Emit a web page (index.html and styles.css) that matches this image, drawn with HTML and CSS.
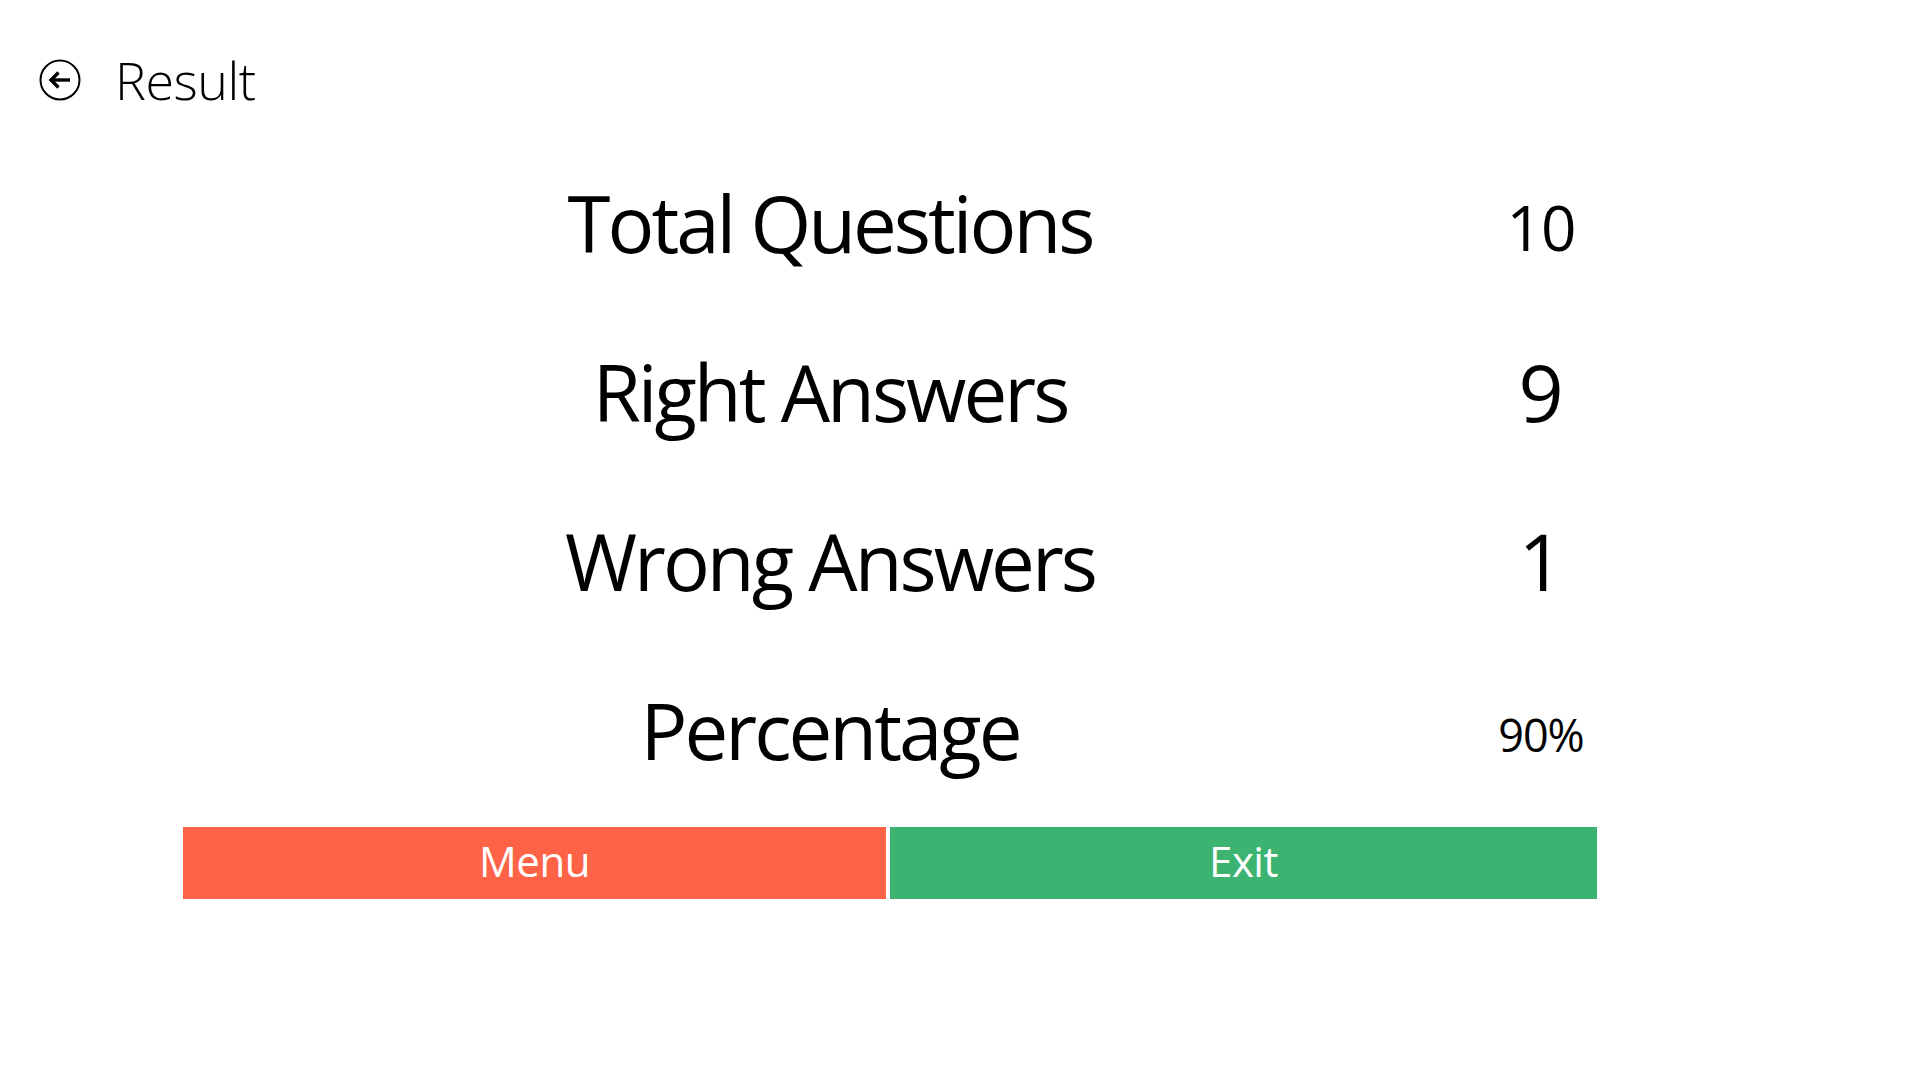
FILE: index.html
```html
<!DOCTYPE html>
<html lang="en">
<head>
<meta charset="utf-8">
<title>Result</title>
<link rel="stylesheet" href="styles.css">
</head>
<body>
<div class="page">
  <header class="header">
    <button class="back" aria-label="Back">
      <svg width="44" height="44" viewBox="0 0 44 44">
        <circle cx="22" cy="22" r="19.5" fill="none" stroke="#000" stroke-width="2"/>
        <path d="M32 22 H13" fill="none" stroke="#000" stroke-width="3.4"/>
        <path d="M20.5 14.5 L13 22 L20.5 29.5" fill="none" stroke="#000" stroke-width="3.4" stroke-linejoin="miter"/>
      </svg>
    </button>
    <h1 class="title">Result</h1>
  </header>
  <main class="content">
    <div class="stats">
      <div class="label">Total Questions</div>
      <div class="value v-mid">10</div>
      <div class="label">Right Answers</div>
      <div class="value v-big">9</div>
      <div class="label">Wrong Answers</div>
      <div class="value v-big">1</div>
      <div class="label">Percentage</div>
      <div class="value v-small">90%</div>
    </div>
    <div class="actions">
      <button class="btn btn-menu">Menu</button>
      <button class="btn btn-exit">Exit</button>
    </div>
  </main>
</div>
</body>
</html>
```
FILE: styles.css
```css
* { box-sizing: border-box; }
html, body {
  margin: 0;
  padding: 0;
  background: #fff;
  width: 1920px;
  height: 1080px;
  overflow: hidden;
}
body {
  font-family: "Open Sans", "Noto Sans", sans-serif;
  color: #000;
}
.page {
  display: flex;
  flex-direction: column;
}
.header {
  height: 138px;
  display: flex;
  align-items: flex-start;
  padding-top: 58px;
  padding-left: 38px;
}
.back {
  width: 44px;
  height: 44px;
  padding: 0;
  margin: 0;
  border: none;
  background: none;
  display: block;
}
.back svg { display: block; }
.title {
  margin: 0 0 0 33px;
  font-weight: 300;
  font-size: 52px;
  line-height: 44px;
  letter-spacing: -0.5px;
}
.content {
  padding-left: 183px;
  width: 1597px;
  box-sizing: content-box;
}
.stats {
  display: grid;
  grid-template-columns: 1294px 128px;
  grid-auto-rows: 169px;
}
.label {
  display: flex;
  align-items: center;
  justify-content: center;
  font-size: 78px;
  letter-spacing: -3px;
  font-weight: 400;
}
.value {
  display: flex;
  align-items: center;
  justify-content: center;
  font-weight: 400;
}
.v-mid { font-size: 62px; padding-top: 8px; letter-spacing: -1px; }
.v-big { font-size: 79px; padding-top: 0; }
.v-small { font-size: 45px; padding-top: 9px; letter-spacing: -1px; }
.actions {
  display: flex;
  gap: 4px;
  margin-top: 13px;
  width: 1414px;
}
.btn {
  border: none;
  margin: 0;
  height: 72px;
  color: #fff;
  font-family: "Open Sans", "Noto Sans", sans-serif;
  font-size: 42px;
  font-weight: 400;
  letter-spacing: -0.5px;
  display: flex;
  align-items: center;
  justify-content: center;
  padding: 0 0 5px 0;
}
.btn-menu { width: 703px; background: #ff6347; }
.btn-exit { width: 707px; background: #3cb371; }
```
